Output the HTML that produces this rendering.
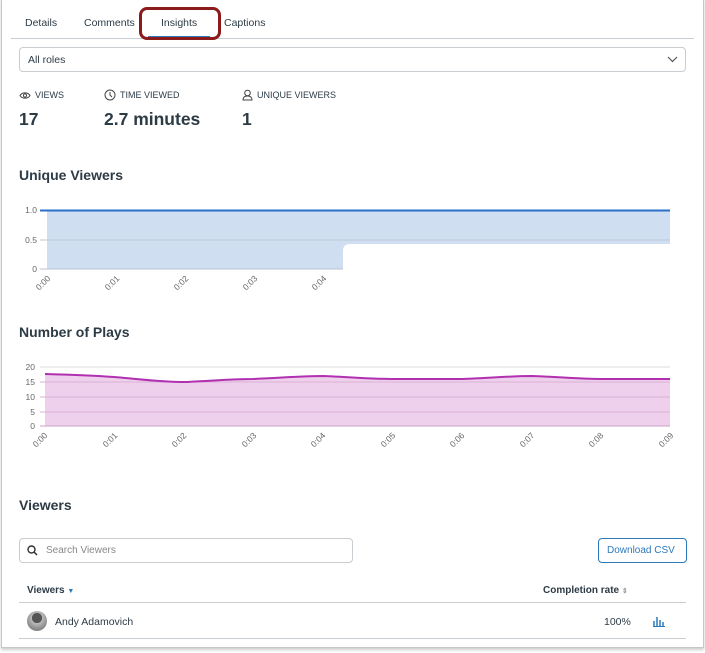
<!DOCTYPE html>
<html><head><meta charset="utf-8"><style>
*{margin:0;padding:0;box-sizing:border-box}
body{width:705px;height:653px;background:#fff;font-family:"Liberation Sans",sans-serif;color:#2d3b45;position:relative;overflow:hidden}
.a{position:absolute;white-space:nowrap}
.frame{position:absolute;left:1px;top:-2px;width:703px;height:650px;border:1px solid #c7c7c7;box-shadow:0 2px 3px rgba(0,0,0,.2)}
.tab{font-size:10.5px;color:#2d3b45;top:17px}
.lbl{font-size:9px;color:#2d3b45;top:90px}
.big{font-size:17.5px;font-weight:bold;top:109px}
h2{position:absolute;font-size:14px;font-weight:bold;color:#2d3b45}
.ax{font-size:8.5px;fill:#666;font-family:"Liberation Sans",sans-serif}
</style></head><body>
<div class="frame"></div>
<div class="a tab" style="left:25px">Details</div>
<div class="a tab" style="left:84px">Comments</div>
<div class="a tab" style="left:161px">Insights</div>
<div class="a tab" style="left:224px">Captions</div>
<div class="a" style="left:11px;top:38px;width:683px;height:1px;background:#c7cdd1"></div>
<div class="a" style="left:148px;top:36px;width:62px;height:2px;background:#2b7abc"></div>
<div class="a" style="left:139px;top:7px;width:82px;height:33px;border:3px solid #8b1a1a;border-radius:8px"></div>
<div class="a" style="left:19px;top:47px;width:667px;height:25px;border:1px solid #c7cdd1;border-radius:4px"></div>
<div class="a" style="left:28px;top:54px;font-size:10.5px">All roles</div>
<svg class="a" style="left:667px;top:55px" width="11" height="8"><path d="M1 2l4.5 4.5L10 2" fill="none" stroke="#555" stroke-width="1.2"/></svg>

<svg class="a" style="left:19px;top:91px" width="12" height="9"><path d="M1 4.5C3 1 9 1 11 4.5 9 8 3 8 1 4.5z" fill="none" stroke="#444" stroke-width="1"/><circle cx="6" cy="4.5" r="1.6" fill="none" stroke="#444"/></svg>
<div class="a lbl" style="left:35px">VIEWS</div>
<svg class="a" style="left:104px;top:89px" width="12" height="12"><circle cx="6" cy="6" r="5" fill="none" stroke="#444"/><path d="M6 3v3l2 2" fill="none" stroke="#444"/></svg>
<div class="a lbl" style="left:120px">TIME VIEWED</div>
<svg class="a" style="left:242px;top:89px" width="11" height="12"><circle cx="5.5" cy="4" r="2.8" fill="none" stroke="#444"/><path d="M1 11c0-3 2-4 4.5-4S10 8 10 11z" fill="none" stroke="#444"/></svg>
<div class="a lbl" style="left:257px">UNIQUE VIEWERS</div>
<div class="a big" style="left:19px">17</div>
<div class="a big" style="left:104px">2.7 minutes</div>
<div class="a big" style="left:242px">1</div>

<h2 style="left:19px;top:167px">Unique Viewers</h2>
<svg class="a" style="left:0;top:195px" width="705" height="110">
<rect x="47" y="15" width="623" height="59" fill="#cfdef0"/>
<path d="M343 74V56q0-7 7-7H670V74z" fill="#fff"/>
<line x1="40" y1="45" x2="670" y2="45" stroke="#bcc8d6" stroke-width="1"/>
<line x1="40" y1="74" x2="343" y2="74" stroke="#b8c3cf" stroke-width="1"/>
<line x1="40" y1="15.5" x2="670" y2="15.5" stroke="#2a6fc9" stroke-width="2"/>
<text class="ax" x="37" y="18" text-anchor="end">1.0</text>
<text class="ax" x="37" y="48" text-anchor="end">0.5</text>
<text class="ax" x="37" y="77" text-anchor="end">0</text>
<g text-anchor="end">
<text class="ax" transform="translate(51,84) rotate(-45)">0:00</text>
<text class="ax" transform="translate(120,84) rotate(-45)">0:01</text>
<text class="ax" transform="translate(189,84) rotate(-45)">0:02</text>
<text class="ax" transform="translate(258,84) rotate(-45)">0:03</text>
<text class="ax" transform="translate(327,84) rotate(-45)">0:04</text>
</g>
</svg>

<h2 style="left:19px;top:324px">Number of Plays</h2>
<svg class="a" style="left:0;top:360px" width="705" height="100">
<line x1="40" y1="7" x2="670" y2="7" stroke="#ddd"/>
<path d="M45 14 C80 15 100 16 114 17 C140 19 160 22 184 22 C210 21 230 19 253 19 C280 18 300 16 323 16 C350 17 370 19 392 19 L462 19 C490 18 510 16 532 16 C560 17 580 19 601 19 L670 19 V66 H45Z" fill="#efd0ec"/>
<line x1="40" y1="22" x2="670" y2="22" stroke="#d9b0d6"/>
<line x1="40" y1="37" x2="670" y2="37" stroke="#d9b0d6"/>
<line x1="40" y1="52" x2="670" y2="52" stroke="#d9b0d6"/>
<line x1="40" y1="66" x2="670" y2="66" stroke="#c9a0c6"/>
<path d="M45 14 C80 15 100 16 114 17 C140 19 160 22 184 22 C210 21 230 19 253 19 C280 18 300 16 323 16 C350 17 370 19 392 19 L462 19 C490 18 510 16 532 16 C560 17 580 19 601 19 L670 19" fill="none" stroke="#b030b0" stroke-width="2"/>
<text class="ax" x="35" y="10" text-anchor="end">20</text>
<text class="ax" x="35" y="25" text-anchor="end">15</text>
<text class="ax" x="35" y="40" text-anchor="end">10</text>
<text class="ax" x="35" y="55" text-anchor="end">5</text>
<text class="ax" x="35" y="69" text-anchor="end">0</text>
<g text-anchor="end">
<text class="ax" transform="translate(48,76) rotate(-45)">0:00</text>
<text class="ax" transform="translate(118,76) rotate(-45)">0:01</text>
<text class="ax" transform="translate(187,76) rotate(-45)">0:02</text>
<text class="ax" transform="translate(257,76) rotate(-45)">0:03</text>
<text class="ax" transform="translate(326,76) rotate(-45)">0:04</text>
<text class="ax" transform="translate(396,76) rotate(-45)">0:05</text>
<text class="ax" transform="translate(465,76) rotate(-45)">0:06</text>
<text class="ax" transform="translate(535,76) rotate(-45)">0:07</text>
<text class="ax" transform="translate(604,76) rotate(-45)">0:08</text>
<text class="ax" transform="translate(674,76) rotate(-45)">0:09</text>
</g>
</svg>

<h2 style="left:19px;top:497px">Viewers</h2>
<div class="a" style="left:19px;top:538px;width:334px;height:25px;border:1px solid #c7cdd1;border-radius:4px"></div>
<svg class="a" style="left:27px;top:545px" width="11" height="11"><circle cx="4.5" cy="4.5" r="3.5" fill="none" stroke="#333" stroke-width="1.4"/><path d="M7 7l3 3" stroke="#333" stroke-width="1.5"/></svg>
<div class="a" style="left:46px;top:545px;font-size:10px;color:#888">Search Viewers</div>
<div class="a" style="left:598px;top:538px;width:89px;height:25px;border:1px solid #2b7abc;border-radius:4px"></div>
<div class="a" style="left:607px;top:545px;font-size:10px;color:#2b7abc">Download CSV</div>
<div class="a" style="left:27px;top:585px;font-size:10px;font-weight:bold">Viewers <span style="color:#2b7abc;font-size:7px">▼</span></div>
<div class="a" style="left:543px;top:585px;font-size:10px;font-weight:bold">Completion rate <span style="color:#999;font-size:7px">⇕</span></div>
<div class="a" style="left:19px;top:602px;width:667px;height:1px;background:#c7cdd1"></div>
<div class="a" style="left:27px;top:611px;width:20px;height:20px;border-radius:50%;background:radial-gradient(circle at 50% 35%,#555 30%,#bbb 32%,#888 70%)"></div>
<div class="a" style="left:55px;top:616px;font-size:10.5px">Andy Adamovich</div>
<div class="a" style="left:604px;top:616px;font-size:10.5px">100%</div>
<svg class="a" style="left:652px;top:614px" width="14" height="13"><path d="M2 12V7M5 12V3M8 12V6M11 12V8" stroke="#2b7abc" stroke-width="1.5" fill="none"/><path d="M1 12.5h12" stroke="#2b7abc"/></svg>
<div class="a" style="left:19px;top:638px;width:667px;height:1px;background:#c7cdd1"></div>
</body></html>
